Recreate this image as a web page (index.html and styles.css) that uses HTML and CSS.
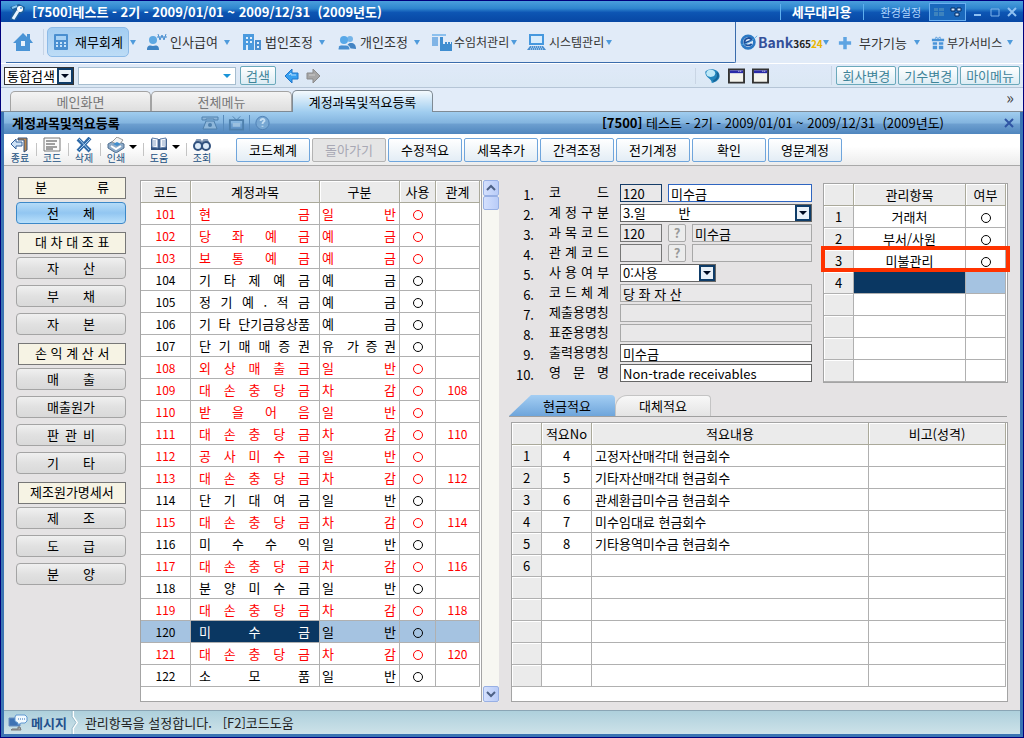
FILE: index.html
```html
<!DOCTYPE html>
<html lang="ko">
<head>
    <meta charset="UTF-8">
    <meta name="viewport" content="width=device-width, initial-scale=1.0">
    <title>계정과목및적요등록</title>
    <link rel="stylesheet" href="styles.css">
</head>
<body>
    <header class="titlebar">
        <svg class="app-icon" viewBox="0 0 16 16"><path d="M1 3l9-3 6 3-1 5-5 3-3 5H1l3-9z" fill="#1d5f9c"/><path d="M4 15L9 7" stroke="#e8f5ff" stroke-width="3"/><path d="M3 4l5-2" stroke="#8cc8f0" stroke-width="2"/><circle cx="11" cy="5" r="3" fill="#fff"/><circle cx="12" cy="4" r="1" fill="#4aa0dd"/></svg>
        <h1>[7500]테스트 - 2기 - 2009/01/01 ~ 2009/12/31 &nbsp;(2009년도)</h1>
        <strong class="edition">세무대리용</strong>
        <a href="#" class="settings">환경설정</a>
        <div class="view-switch">
            <button aria-label="분할"><svg viewBox="0 0 12 10"><path d="M1 1h4v3H1zM6 1h5v3H6zM1 5h4v4H1zM6 5h5v4H6z" fill="#3e83bd"/></svg></button>
            <button aria-label="창"><svg viewBox="0 0 12 10"><path d="M1 1h4v3H1zM7 1h4v3H7zM5 6h4v3H5z" fill="#cfe6ff" stroke="#022b63"/></svg></button>
        </div>
        <div class="window-buttons">
            <button aria-label="최소화"><svg viewBox="0 0 10 10"><path d="M1 8h7" stroke="#8fc1f2" stroke-width="2"/></svg></button>
            <button aria-label="최대화"><svg viewBox="0 0 10 10"><path d="M1 2h8v7H1z" fill="none" stroke="#7fb4ea"/></svg></button>
            <button aria-label="닫기"><svg viewBox="0 0 10 10"><path d="M1 1l8 8M9 1L1 9" stroke="#8fc1f2" stroke-width="2"/></svg></button>
        </div>
    </header>

    <nav class="menubar">
        <div class="menu-main">
            <button class="home" aria-label="홈"><svg viewBox="0 0 20 20"><path d="M10 1l4 4V2h3v5l3 4h-3v8H3v-8H0z" fill="#4a94d6"/><path d="M8 9h4v5H8z" fill="#e8f3fd"/></svg></button>
            <button class="menu-item active">
                <svg viewBox="0 0 16 18"><rect x="1" y="1" width="14" height="16" rx="1" fill="#4a8fd0"/><path d="M3 3h10v4H3z" fill="#a8d2f5"/><path d="M3 10h10M3 13h10" stroke="#c6e2fa" stroke-width="2" stroke-dasharray="2 2"/></svg>
                <span>재무회계</span></button>
            <button class="menu-item">
                <svg viewBox="0 0 20 18"><circle cx="6" cy="7" r="4" fill="#5ea8e2"/><path d="M0 17c0-5 3-5 6-4 3-1 6-1 6 4z" fill="#3f84c4"/><path d="M11 1l2 6 2-5 2 5 2-6M10 4h10" fill="none" stroke="#4a8fd0"/></svg>
                <span>인사급여</span></button>
            <button class="menu-item">
                <svg viewBox="0 0 20 18"><path d="M1 1h11v16H1z" fill="#4b9ade"/><path d="M4 4h2v2H4zM8 4h2v2H8zM4 8h2v2H4zM8 8h2v2H8zM4 12h2v5H4z" fill="#e2effc"/><path d="M13 7h6v10h-6z" fill="#4a8fd0"/><path d="M15 9h2v2h-2zM15 13h2v2h-2z" fill="#e2effc"/></svg>
                <span>법인조정</span></button>
            <button class="menu-item">
                <svg viewBox="0 0 20 18"><circle cx="13" cy="6" r="3" fill="#74b4e8"/><path d="M10 15c0-5 3-5 4-5s5 0 5 6z" fill="#4384c4"/><circle cx="7" cy="7" r="4" fill="#58a8e8"/><path d="M1 17c0-6 3-5 6-5s6 0 6 5z" fill="#4a8fd0" stroke="#e2effc"/></svg>
                <span>개인조정</span></button>
            <button class="menu-item long">
                <svg viewBox="0 0 20 18"><path d="M0 1h14v2H0z" fill="#8cc0ee"/><path d="M0 4h6v9H0z" fill="#80b4e6"/><path d="M8 4h3v7h2V9h2v2h1V9h2v2h1V9h1v9H8z" fill="#3f8dd0"/></svg>
                <span>수임처관리</span></button>
            <button class="menu-item long">
                <svg viewBox="0 0 20 18"><path d="M3 2h13v9H3z" fill="#d8ecfc" stroke="#4698de" stroke-width="2"/><path d="M3 13h13l3 4H0z" fill="#4a8fd0"/><path d="M4 14h11M3 16h13" stroke="#d8ecfc" stroke-dasharray="1 1"/></svg>
                <span>시스템관리</span></button>
        </div>
        <div class="menu-side">
            <button class="menu-item bank">
                <svg class="bank-mark" viewBox="0 0 20 20"><circle cx="9" cy="9" r="7" fill="none" stroke="#2b78c4" stroke-width="3"/><path d="M5 10l8-3c-1-4-7-3-8 1-1 5 5 6 8 3" fill="none" stroke="#1c4f9c" stroke-width="2"/><path d="M1 12C6 12 14 8 19 2" fill="none" stroke="#58a8e0" stroke-width="1"/></svg>
                <span class="bank-name">Bank<small>365<em>24</em></small></span></button>
            <button class="menu-item extra">
                <svg viewBox="0 0 16 16"><path d="M8 1v14M1 8h14" stroke="#5ea4e2" stroke-width="4"/></svg>
                <span>부가기능</span></button>
            <button class="menu-item long service">
                <svg viewBox="0 0 16 16"><path d="M1 3h14v3H1zM2 7h5v3H2zM9 7h5v3H9zM2 11h5v4H2zM9 11h5v4H9z" fill="#4a94d8"/><path d="M5 3l1-2 2 2 2-2 1 2" fill="none" stroke="#4a94d8"/></svg>
                <span>부가서비스</span></button>
        </div>
    </nav>

    <div class="searchbar">
        <select class="search-type" aria-label="검색 구분"><option>통합검색</option></select>
        <input type="text" class="search-text" aria-label="검색어">
        <button class="glass">검색</button>
        <button class="arrow" aria-label="뒤로"><svg viewBox="0 0 16 16"><path d="M1 8l7-7v4h6v6H8v4z" fill="#38a0f0" stroke="#1e76cc"/><path d="M5 7l2-2v2h5" stroke="#b0dcff" fill="none"/></svg></button>
        <button class="arrow" aria-label="앞으로"><svg viewBox="0 0 16 16"><path d="M15 8L8 1v4H2v6h6v4z" fill="#a6a6a6" stroke="#8b8b8b"/><path d="M4 7h6" stroke="#ccc"/></svg></button>
        <div class="shortcuts">
            <button aria-label="웹"><svg viewBox="0 0 18 18"><path d="M1 4c5-5 16-3 16 5 0 4-4 7-9 8 1-5-8-6-7-13z" fill="#2386bd"/><ellipse cx="7" cy="6" rx="5" ry="4" fill="#bde8f8"/><path d="M14 5c3 4 0 8-4 10" stroke="#176496" fill="none" stroke-width="2"/></svg></button>
            <button aria-label="창 1"><svg viewBox="0 0 18 16"><path d="M1 1h16v14H1z" fill="#f4f4ee" stroke="#333" stroke-width="2"/><path d="M2 2h14v3H2z" fill="#2a2aa8"/><path d="M11 3h4" stroke="#fff" stroke-dasharray="1 1"/></svg></button>
            <button aria-label="창 2"><svg viewBox="0 0 18 16"><path d="M1 1h16v14H1z" fill="#f4f4ee" stroke="#333" stroke-width="2"/><path d="M2 2h14v3H2z" fill="#2a2aa8"/><path d="M11 3h4" stroke="#fff" stroke-dasharray="1 1"/></svg></button>
        </div>
        <div class="quick">
            <button class="glass">회사변경</button>
            <button class="glass">기수변경</button>
            <button class="glass">마이메뉴</button>
        </div>
    </div>

    <div class="page-tabs">
        <button>메인화면</button>
        <button>전체메뉴</button>
        <button class="active">계정과목및적요등록</button>
        <span class="more">»</span>
    </div>

    <div class="frame">
        <div class="subtitle">
            <h2>계정과목및적요등록</h2>
            <div class="sub-icons">
                <svg viewBox="0 0 18 16"><path d="M1 5V2h16v3h-4V4H5v1zM5 6h8l3 8H2z" fill="#8db6da" stroke="#4e80ad"/><circle cx="9" cy="10" r="2" fill="#4e80ad"/></svg>
                <svg viewBox="0 0 18 16"><path d="M2 5h14v10H2z" fill="none" stroke="#4e80ad" stroke-width="2"/><path d="M5 1l4 4 4-4" fill="none" stroke="#4e80ad"/><path d="M5 8h8v4H5z" fill="#9bc0df"/></svg>
                <svg viewBox="0 0 18 16"><circle cx="9" cy="8" r="7" fill="#77a7d3" stroke="#4e80b5"/><path d="M7 6c0-3 5-3 4 0-1 1-2 1-2 3M9 11v1" stroke="#c3ddf2" stroke-width="2" fill="none"/></svg>
            </div>
            <p><b>[7500]</b> 테스트 - 2기 - 2009/01/01 ~ 2009/12/31 &nbsp;(2009년도)</p>
            <button class="close" aria-label="화면 닫기"><svg viewBox="0 0 10 10"><path d="M1 1l8 8M9 1L1 9" stroke="#2f55a4" stroke-width="2"/></svg></button>
        </div>

        <div class="toolbar">
            <button class="tool"><svg viewBox="0 0 20 16"><path d="M8 1h9v12l-3 2V3H8z" fill="#c08a4c" stroke="#30507e"/><path d="M1 7l5-5v3h6v4H6v3z" fill="#cfe2f6" stroke="#33609a"/></svg>종료</button>
            <button class="tool"><svg viewBox="0 0 20 16"><path d="M2 1h16v13H2z" fill="#fafafa" stroke="#777"/><path d="M4 4h11M4 7h9M4 10h11M4 12h7" stroke="#444"/></svg>코드</button>
            <button class="tool"><svg viewBox="0 0 20 16"><path d="M4 2l12 12M16 1L4 14" stroke="#2f6aa8" stroke-width="4"/><path d="M5 2l10 11M16 2L5 13" stroke="#a8cef0"/></svg>삭제</button>
            <button class="tool drop"><svg viewBox="0 0 20 16"><path d="M2 7l7-4 9 4v4l-8 5-8-5z" fill="#8caac8" stroke="#506f90"/><path d="M6 5l5-5 6 3-4 5z" fill="#f4f4f4" stroke="#999"/><path d="M5 9l5 3 5-3" fill="none" stroke="#fff" stroke-width="2"/><path d="M7 7l4-2 4 2-4 2z" fill="#3f8dcd"/></svg>인쇄</button>
            <button class="tool drop"><svg viewBox="0 0 20 16"><path d="M2 2h16v11H2z" fill="#31517e"/><path d="M3 1l6 1v9l-6-1zM17 1l-6 1v9l6-1z" fill="#f7f9fd" stroke="#5d7da8"/><path d="M4 4h3M4 6h3M4 8h3M13 4h3M13 6h3M13 8h3" stroke="#90a8c8"/></svg>도움</button>
            <button class="tool"><svg viewBox="0 0 20 16"><path d="M3 7l2-4h3l2 3 2-3h3l2 4" fill="none" stroke="#8499b5" stroke-width="2"/><circle cx="6" cy="9" r="4" fill="#dceaf8" stroke="#31517e" stroke-width="2"/><circle cx="14" cy="9" r="4" fill="#dceaf8" stroke="#31517e" stroke-width="2"/></svg>조회</button>
            <div class="actions">
                <button>코드체계</button>
                <button disabled>돌아가기</button>
                <button>수정적요</button>
                <button>세목추가</button>
                <button>간격조정</button>
                <button>전기계정</button>
                <button>확인</button>
                <button>영문계정</button>
            </div>
        </div>

        <main class="content">
            <aside class="categories">
                <section>
                    <h3>분 류</h3>
                    <button class="active"><span>전 체</span></button>
                </section>
                <section>
                    <h3>대 차 대 조 표</h3>
                    <button><span>자 산</span></button>
                    <button><span>부 채</span></button>
                    <button><span>자 본</span></button>
                </section>
                <section>
                    <h3>손 익 계 산 서</h3>
                    <button><span>매 출</span></button>
                    <button><span>매출원가</span></button>
                    <button><span>판 관 비</span></button>
                    <button><span>기 타</span></button>
                </section>
                <section>
                    <h3>제조원가명세서</h3>
                    <button><span>제 조</span></button>
                    <button><span>도 급</span></button>
                    <button><span>분 양</span></button>
                </section>
            </aside>

            <div class="accounts">
                <table class="grid">
                    <colgroup><col class="w50"><col><col class="w80"><col class="w36"><col class="w44"></colgroup>
                    <thead><tr><th>코드</th><th>계정과목</th><th>구분</th><th>사용</th><th>관계</th></tr></thead>
                    <tbody>
                        <tr class="red"><td class="num">101</td><td class="name">현 금</td><td class="kind">일 반</td><td><i></i></td><td class="num"></td></tr>
                        <tr class="red"><td class="num">102</td><td class="name">당 좌 예 금</td><td class="kind">예 금</td><td><i></i></td><td class="num"></td></tr>
                        <tr class="red"><td class="num">103</td><td class="name">보 통 예 금</td><td class="kind">예 금</td><td><i></i></td><td class="num"></td></tr>
                        <tr><td class="num">104</td><td class="name">기 타 제 예 금</td><td class="kind">예 금</td><td><i></i></td><td class="num"></td></tr>
                        <tr><td class="num">105</td><td class="name">정 기 예 . 적 금</td><td class="kind">예 금</td><td><i></i></td><td class="num"></td></tr>
                        <tr><td class="num">106</td><td class="name">기 타 단기금융상품</td><td class="kind">예 금</td><td><i></i></td><td class="num"></td></tr>
                        <tr><td class="num">107</td><td class="name">단 기 매 매 증 권</td><td class="kind">유 &nbsp;가 증 권</td><td><i></i></td><td class="num"></td></tr>
                        <tr class="red"><td class="num">108</td><td class="name">외 상 매 출 금</td><td class="kind">일 반</td><td><i></i></td><td class="num"></td></tr>
                        <tr class="red"><td class="num">109</td><td class="name">대 손 충 당 금</td><td class="kind">차 감</td><td><i></i></td><td class="num">108</td></tr>
                        <tr class="red"><td class="num">110</td><td class="name">받 을 어 음</td><td class="kind">일 반</td><td><i></i></td><td class="num"></td></tr>
                        <tr class="red"><td class="num">111</td><td class="name">대 손 충 당 금</td><td class="kind">차 감</td><td><i></i></td><td class="num">110</td></tr>
                        <tr class="red"><td class="num">112</td><td class="name">공 사 미 수 금</td><td class="kind">일 반</td><td><i></i></td><td class="num"></td></tr>
                        <tr class="red"><td class="num">113</td><td class="name">대 손 충 당 금</td><td class="kind">차 감</td><td><i></i></td><td class="num">112</td></tr>
                        <tr><td class="num">114</td><td class="name">단 기 대 여 금</td><td class="kind">일 반</td><td><i></i></td><td class="num"></td></tr>
                        <tr class="red"><td class="num">115</td><td class="name">대 손 충 당 금</td><td class="kind">차 감</td><td><i></i></td><td class="num">114</td></tr>
                        <tr><td class="num">116</td><td class="name">미 수 수 익</td><td class="kind">일 반</td><td><i></i></td><td class="num"></td></tr>
                        <tr class="red"><td class="num">117</td><td class="name">대 손 충 당 금</td><td class="kind">차 감</td><td><i></i></td><td class="num">116</td></tr>
                        <tr><td class="num">118</td><td class="name">분 양 미 수 금</td><td class="kind">일 반</td><td><i></i></td><td class="num"></td></tr>
                        <tr class="red"><td class="num">119</td><td class="name">대 손 충 당 금</td><td class="kind">차 감</td><td><i></i></td><td class="num">118</td></tr>
                        <tr class="selected"><td class="num">120</td><td class="name cursor">미 수 금</td><td class="kind">일 반</td><td><i></i></td><td class="num"></td></tr>
                        <tr class="red"><td class="num">121</td><td class="name">대 손 충 당 금</td><td class="kind">차 감</td><td><i></i></td><td class="num">120</td></tr>
                        <tr><td class="num">122</td><td class="name">소 모 품</td><td class="kind">일 반</td><td><i></i></td><td class="num"></td></tr>
                    </tbody>
                </table>
            </div>
            <div class="scrollbar">
                <button aria-label="위로"><svg viewBox="0 0 10 10"><path d="M1 7l4-4 4 4" fill="none" stroke="#4d6185" stroke-width="2"/></svg></button>
                <div class="thumb"></div>
                <button class="down" aria-label="아래로"><svg viewBox="0 0 10 10"><path d="M1 3l4 4 4-4" fill="none" stroke="#4d6185" stroke-width="2"/></svg></button>
            </div>

            <div class="detail">
                <div class="detail-top">
                    <form class="account-form">
                        <div class="row"><label for="code"><span>1.</span><b>코 드</b></label><input class="short navy" id="code" value="120" readonly><input class="focus" aria-label="코드명" value="미수금"></div>
                        <div class="row"><label for="type"><span>2.</span><b>계 정 구 분</b></label><select id="type"><option>3.일 &nbsp; &nbsp; &nbsp; &nbsp; 반</option></select></div>
                        <div class="row"><label for="subject"><span>3.</span><b>과 목 코 드</b></label><input class="short dark" id="subject" value="120" readonly><button type="button" class="help">?</button><input aria-label="과목명" value="미수금" readonly></div>
                        <div class="row"><label for="related"><span>4.</span><b>관 계 코 드</b></label><input class="short dark" id="related" readonly><button type="button" class="help">?</button><input aria-label="관계코드명" readonly></div>
                        <div class="row"><label for="use"><span>5.</span><b>사 용 여 부</b></label><select class="half" id="use"><option>0:사용</option></select></div>
                        <div class="row"><label for="system"><span>6.</span><b>코 드 체 계</b></label><input id="system" value="당 좌 자 산" readonly></div>
                        <div class="row"><label for="submit-name"><span>7.</span><b>제출용명칭</b></label><input id="submit-name" readonly></div>
                        <div class="row"><label for="std-name"><span>8.</span><b>표준용명칭</b></label><input id="std-name" readonly></div>
                        <div class="row"><label for="print-name"><span>9.</span><b>출력용명칭</b></label><input id="print-name" value="미수금"></div>
                        <div class="row"><label for="eng-name"><span>10.</span><b>영 문 명</b></label><input id="eng-name" value="Non-trade receivables"></div>
                    </form>

                    <div class="box manage">
                        <table class="grid">
                            <colgroup><col class="w30"><col><col class="w40"></colgroup>
                            <thead><tr><th></th><th>관리항목</th><th>여부</th></tr></thead>
                            <tbody>
                                <tr><th>1</th><td>거래처</td><td><i></i></td></tr>
                                <tr><th>2</th><td>부서/사원</td><td><i></i></td></tr>
                                <tr><th>3</th><td>미불관리</td><td><i></i></td></tr>
                                <tr class="selected"><th>4</th><td class="cursor"></td><td></td></tr>
                                <tr><th></th><td></td><td></td></tr>
                                <tr><th></th><td></td><td></td></tr>
                                <tr><th></th><td></td><td></td></tr>
                                <tr><th></th><td></td><td></td></tr>
                            </tbody>
                        </table>
                        <div class="marker"></div>
                    </div>
                </div>

                <div class="memo-tabs">
                    <button class="active">현금적요</button>
                    <button>대체적요</button>
                </div>

                <div class="box memos">
                    <table class="grid">
                        <colgroup><col class="w30"><col class="w50"><col><col class="w137"></colgroup>
                        <thead><tr><th></th><th>적요No</th><th>적요내용</th><th>비고(성격)</th></tr></thead>
                        <tbody>
                            <tr><th>1</th><td>4</td><td class="left">고정자산매각대 현금회수</td><td></td></tr>
                            <tr><th>2</th><td>5</td><td class="left">기타자산매각대 현금회수</td><td></td></tr>
                            <tr><th>3</th><td>6</td><td class="left">관세환급미수금 현금회수</td><td></td></tr>
                            <tr><th>4</th><td>7</td><td class="left">미수임대료 현금회수</td><td></td></tr>
                            <tr><th>5</th><td>8</td><td class="left">기타용역미수금 현금회수</td><td></td></tr>
                            <tr><th>6</th><td></td><td></td><td></td></tr>
                            <tr><th></th><td></td><td></td><td></td></tr>
                            <tr><th></th><td></td><td></td><td></td></tr>
                            <tr><th></th><td></td><td></td><td></td></tr>
                            <tr><th></th><td></td><td></td><td></td></tr>
                            <tr><th></th><td></td><td></td><td></td></tr>
                        </tbody>
                    </table>
                </div>
            </div>
        </main>

        <footer class="statusbar">
            <svg viewBox="0 0 20 18"><path d="M1 4h11v8H1z" fill="#3f73b4" stroke="#6a8fc0"/><path d="M4 15h6v-2h2l1 3H3z" fill="#a8a8a8" stroke="#777"/><path d="M8 1h9l2 2v4l-2 2h-4l-3 2V9L7 7V3z" fill="#f2faff" stroke="#5f98d2"/><path d="M10 5h7" stroke="#2f6cb5" stroke-width="1" stroke-dasharray="1 1"/></svg>
            <strong>메시지</strong>
            <svg class="divider" viewBox="0 0 8 24"><path d="M2 0v6l4 6-4 6v6" fill="none" stroke="#fff" stroke-width="2"/><path d="M1 0v6l4 6-4 6v6" fill="none" stroke="#8fb4c4"/></svg>
            <p>관리항목을 설정합니다. &nbsp; [F2]코드도움</p>
        </footer>
    </div>
</body>
</html>
```
FILE: styles.css
```css
:root {
    --navy: #00007c;
    --frame: #3b75b3;
    --line: #b0b0b0;
    --panel: #e5e3e4;
    --head: #ebebeb;
    --cursor: #0a3762;
    --row: #a5c3e1;
    --red: #ff0000;
}

* {
    box-sizing: border-box;
}

body {
    margin: 0;
    min-height: 100vh;
    display: flex;
    flex-direction: column;
    border: 1px solid var(--navy);
    background: #e1ebf8;
    color: #000;
    font-family: "Noto Sans CJK KR", sans-serif;
    font-size: 13px;
    line-height: 16px;
}

h1, h2, h3, p {
    margin: 0;
    font-size: 13px;
}

button, input, select {
    font: inherit;
    color: inherit;
    margin: 0;
    padding: 0;
    border-radius: 0;
}

button {
    border: none;
    background: none;
    white-space: nowrap;
}

svg {
    display: block;
    flex: none;
}

/* title bar */
.titlebar {
    display: flex;
    align-items: center;
    height: 21px;
    padding: 0 6px 0 8px;
    background: linear-gradient(#4a9fdc, #2f86cf 35%, #0d55b3 55%, #0747a4);
    color: #fff;
}

.app-icon {
    width: 16px;
    height: 16px;
    margin-right: 7px;
}

.titlebar h1 {
    flex: 1;
    white-space: pre;
}

.edition {
    padding: 0 11px;
    border: solid #5fb0ee;
    border-width: 0 1px;
}

.settings {
    margin: 0 8px 0 17px;
    color: #b3d8ff;
    font-size: 11px;
    text-decoration: none;
}

.view-switch {
    display: flex;
    align-items: center;
    gap: 5px;
    height: 18px;
    padding: 0 3px;
    border: 1px solid #69aef0;
    background: #1a68bc;
}

.view-switch svg {
    width: 12px;
    height: 10px;
}

.window-buttons {
    display: flex;
    gap: 7px;
    margin-left: 7px;
}

.window-buttons svg {
    width: 10px;
    height: 10px;
}

/* main menu */
.menubar {
    display: flex;
    height: 41px;
    padding-left: 5px;
}

.menu-main {
    flex: 1;
    display: flex;
    align-items: center;
    border-right: 1px solid #3a6cac;
    border-bottom: 1px solid #3a6cac;
    border-bottom-right-radius: 2px;
}

.home {
    width: 38px;
    height: 26px;
    padding-left: 7px;
    border-right: 1px solid #c6d4e6;
}

.home svg {
    width: 20px;
    height: 20px;
}

.menu-item {
    display: flex;
    align-items: center;
    gap: 3px;
    width: 95px;
    height: 30px;
    padding: 0 6px;
    color: #333;
}

.menu-item svg {
    width: 20px;
    height: 18px;
}

.menu-item::after {
    content: "";
    margin-left: auto;
    border: 3px solid transparent;
    border-top: 5px solid #4f9bdc;
    border-bottom: none;
}

.menu-item.active {
    position: relative;
    width: 82px;
    margin: 0 12px 0 3px;
    padding-left: 5px;
    gap: 6px;
    border: 1px solid #8dbbe8;
    border-radius: 5px;
    background: linear-gradient(#a3cdf2, #bddcf6);
    color: #000;
}

.menu-item.active svg {
    width: 16px;
}

.menu-item.active::after {
    position: absolute;
    right: -8px;
}

.menu-item.long {
    font-size: 12px;
    gap: 2px;
}

.menu-side {
    display: flex;
    align-items: center;
    padding-right: 5px;
}

.menu-side .menu-item {
    padding: 0 5px 0 8px;
}

.menu-side .menu-item svg {
    width: 14px;
    height: 14px;
}

.menu-side .menu-item.extra {
    gap: 7px;
    padding-left: 10px;
    padding-right: 3px;
}

.menu-side .menu-item.bank {
    width: 92px;
    gap: 0;
    padding: 0 4px;
}

.menu-side .bank .bank-mark {
    width: 18px;
    height: 18px;
}

.bank-name {
    color: #34509a;
    font-size: 14px;
    font-weight: bold;
}

.bank-name small {
    color: #222;
    font-size: 10px;
}

.bank-name em {
    color: #e8b400;
    font-style: normal;
}

/* search row */
.searchbar {
    display: flex;
    align-items: center;
    height: 25px;
    padding: 0 3px;
    border-top: 1px solid #fff;
    border-bottom: 1px solid #b5c5d6;
    background: linear-gradient(#dfe9f8, #dbe8f4);
}

select {
    appearance: none;
    border: 1px solid #333;
    background: #fff url("data:image/svg+xml,%3Csvg xmlns='http://www.w3.org/2000/svg' width='16' height='16'%3E%3Cpath d='M1 1h14v14H1z' fill='%23eaf1f8' stroke='%230f3c68' stroke-width='2'/%3E%3Cpath d='M4 6h8l-4 4z' fill='%23000a20'/%3E%3C/svg%3E") no-repeat right center;
}

.search-type {
    width: 70px;
    height: 18px;
    padding-left: 2px;
    line-height: 16px;
}

.search-text {
    width: 158px;
    height: 18px;
    margin: 0 4px;
    border: 1px solid #a6bdcf;
    background: #fff url("data:image/svg+xml,%3Csvg xmlns='http://www.w3.org/2000/svg' width='16' height='16'%3E%3Cpath d='M4 6h8l-4 4z' fill='%231a94d8'/%3E%3C/svg%3E") no-repeat right center;
}

.glass {
    height: 19px;
    padding: 0 5px;
    border: 1px solid #6ba9bb;
    border-radius: 2px;
    background: linear-gradient(#fff, #dcecf4);
    color: #3f8499;
    line-height: 16px;
}

.arrow {
    margin-left: 8px;
}

.arrow + .arrow {
    margin-left: 5px;
}

.arrow svg {
    width: 16px;
    height: 16px;
}

.shortcuts {
    display: flex;
    gap: 7px;
    margin-left: auto;
    padding: 0 62px 0 8px;
    border-left: 1px solid #c9d5e4;
}

.shortcuts svg {
    width: 17px;
    height: 16px;
}

.quick {
    display: flex;
    gap: 2px;
    padding-left: 4px;
    border-left: 1px solid #c9d5e4;
}

/* open pages */
.page-tabs {
    display: flex;
    align-items: flex-end;
    height: 24px;
    padding-left: 9px;
    border-bottom: 1px solid #7f8a94;
    background: #e2ecf9;
}

.page-tabs button {
    width: 141px;
    height: 20px;
    border: 1px solid #a3a3a3;
    border-bottom: none;
    border-radius: 5px 5px 0 0;
    background: linear-gradient(#f4f4f4, #dedede);
    color: #777;
}

.page-tabs .active {
    height: 22px;
    margin-bottom: -1px;
    border-color: #7f8a94;
    background: linear-gradient(#f4fafe, #a0cdef);
    color: #000;
}

.more {
    margin-left: auto;
    padding: 0 9px 6px 0;
    color: #444;
    font-size: 16px;
}

.frame {
    flex: 1;
    display: flex;
    flex-direction: column;
    border: solid var(--frame);
    border-width: 0 3px 3px;
}

.subtitle {
    display: flex;
    align-items: center;
    height: 22px;
    padding: 0 6px 0 8px;
    background: linear-gradient(#a0cdef, #83b4df 50%, #6d9fd0 55%, #4f86be);
}

.subtitle h2 {
    width: 185px;
}

.sub-icons {
    display: flex;
}

.sub-icons svg {
    width: 26px;
    height: 16px;
    padding: 0 4px;
    border-left: 1px solid #578abb;
}

.sub-icons svg:first-child {
    border-left: none;
}

.subtitle p {
    margin-left: auto;
    white-space: pre;
}

.close {
    margin-left: 60px;
}

.close svg {
    width: 10px;
    height: 10px;
}

/* toolbar */
.toolbar {
    display: flex;
    align-items: center;
    height: 32px;
    border-bottom: 1px solid #a9a9a9;
    background: linear-gradient(#fff 40%, #ececec);
}

.tool {
    display: flex;
    flex-direction: column;
    align-items: center;
    position: relative;
    width: 32px;
    color: #22507f;
    font-size: 10px;
    line-height: 10px;
}

.tool svg {
    width: 20px;
    height: 16px;
}

.tool + .tool::before {
    content: "";
    position: absolute;
    left: 0;
    top: 6px;
    height: 13px;
    border-left: 1px solid #c4c4c4;
}

.tool.drop {
    width: 43px;
    padding-right: 11px;
}

.tool.drop::after {
    content: "";
    position: absolute;
    right: 6px;
    top: 8px;
    border: 4px solid transparent;
    border-top-color: #000;
    border-bottom: none;
}

.actions {
    display: flex;
    gap: 2px;
    margin-left: 18px;
}

.actions button {
    width: 74px;
    height: 24px;
    border: 1px solid #6fa5dc;
    border-radius: 2px;
    background: linear-gradient(#fff, #e3edf5);
}

.actions button:disabled {
    border-color: #b3b3b3;
    background: #e5e5e5;
    color: #a8a8b4;
}

/* work area */
.content {
    flex: 1;
    display: flex;
    padding: 14px 12px 8px;
    background: var(--panel);
}

.categories {
    width: 110px;
    margin: -3px 14px 0 0;
}

.categories section {
    display: flex;
    flex-direction: column;
    gap: 6px;
    margin-bottom: 8px;
}

.categories h3 {
    height: 22px;
    margin: 0 0 -3px 2px;
    padding: 0 16px;
    border: 1px solid #777;
    background: #f6f3e4;
    font-weight: normal;
    line-height: 18px;
    text-align-last: justify;
    white-space: nowrap;
}

.categories section:last-child h3 {
    padding: 0 11px;
}

.categories button {
    height: 22px;
    padding: 0 30px;
    border: 1px solid #a4a4a4;
    border-radius: 4px;
    background: linear-gradient(#f0f0f0, #e1e1e1 50%, #d9d9d9);
    line-height: 18px;
}

.categories span {
    display: block;
    text-align-last: justify;
}

.categories .active {
    border-color: #3c88c8;
    background: linear-gradient(#b5dbf8, #92c6f1 50%, #b9e0fb);
}

.accounts, .box {
    border: 1px solid #a4a4a4;
    background: #fff;
    padding-right: 1px;
}

.accounts {
    width: 342px;
}

/* data tables */
.grid {
    width: 100%;
    table-layout: fixed;
    border-collapse: separate;
    border-spacing: 0;
}

.w30 { width: 30px; }
.w36 { width: 36px; }
.w40 { width: 40px; }
.w44 { width: 44px; }
.w50 { width: 50px; }
.w80 { width: 80px; }
.w137 { width: 137px; }

.grid th, .grid td {
    height: 22px;
    padding: 0;
    border-right: 1px solid var(--line);
    border-bottom: 1px solid var(--line);
    font-weight: normal;
    text-align: center;
    white-space: nowrap;
}

.grid th {
    background: var(--head);
    box-shadow: inset 1px 1px #fff;
}

.grid thead th {
    border-color: #aaa99a;
}

.grid .num {
    font-size: 12px;
}

.grid .name, .grid .kind {
    text-align-last: justify;
}

.grid .name {
    padding: 0 9px 0 8px;
}

.grid .kind {
    padding: 0 3px 0 2px;
}

.grid .left {
    padding-left: 3px;
    text-align: left;
}

.grid i {
    display: inline-block;
    width: 10px;
    height: 10px;
    border: 1px solid currentColor;
    border-radius: 50%;
    vertical-align: middle;
}

.red {
    color: var(--red);
}

.selected td {
    background: var(--row);
}

.selected .cursor {
    background: var(--cursor);
    color: #fff;
}

.scrollbar {
    display: flex;
    flex-direction: column;
    width: 17px;
    padding-left: 1px;
    background: #f7f7f2;
}

.scrollbar button, .thumb {
    height: 16px;
    border: 1px solid #98b0e4;
    border-radius: 2px;
    background: linear-gradient(90deg, #d4e0fd, #b9ccf8);
}

.scrollbar svg {
    width: 10px;
    height: 10px;
    margin: 0 auto;
}

.thumb {
    height: 14px;
}

.scrollbar .down {
    margin-top: auto;
}

.detail {
    flex: 1;
    display: flex;
    flex-direction: column;
    padding-left: 10px;
}

.detail-top {
    display: flex;
    padding: 3px 0 0 2px;
}

.account-form {
    display: flex;
    flex-direction: column;
    gap: 2px;
    width: 301px;
    margin: 1px 11px 0 0;
}

.row {
    display: flex;
    gap: 6px;
    height: 18px;
}

.row label {
    display: flex;
    flex: none;
    width: 103px;
}

.row label span {
    width: 23px;
    margin-right: 15px;
    padding-top: 3px;
    text-align: right;
}

.row label b {
    width: 60px;
    font-weight: normal;
    text-align-last: justify;
    white-space: nowrap;
}

.row input, .row select {
    flex: 1;
    min-width: 0;
    height: 18px;
    padding: 0 2px;
    border: 1px solid #666;
    background-color: #fff;
    line-height: 16px;
}

.row input:read-only {
    border-color: #a8a8a8;
    background: #e9e8e9;
}

.row .short {
    flex: none;
    width: 42px;
}

.row .short.navy {
    border-color: #153c68;
}

.row .short.dark {
    border-color: #777;
}

.row .focus {
    border-color: #2f65c0;
}

.row .half {
    flex: none;
    width: 96px;
}

.help {
    width: 18px;
    border: 1px solid #a8a8a8;
    border-radius: 2px;
    background: #ececec;
    color: #999;
    font-weight: bold;
}

.manage {
    position: relative;
    flex: 1;
}

/* highlight frame over the third row */
.marker {
    position: absolute;
    top: 62px;
    left: -3px;
    right: -3px;
    height: 26px;
    border: 4px solid #ff3300;
}

.memo-tabs {
    display: flex;
    height: 22px;
    margin: 12px 1px 5px 0;
    border-bottom: 1px solid #a0a0a0;
}

.memo-tabs button {
    width: 96px;
    border: 1px solid #c4c4c4;
    border-bottom: none;
    border-radius: 12px 4px 0 0;
    background: linear-gradient(#f8f8f8, #e4e4e4);
}

.memo-tabs .active {
    width: 106px;
    padding-left: 10px;
    border: none;
    border-radius: 0 4px 0 0;
    background: linear-gradient(#a4cef3, #6ea5db);
    clip-path: polygon(22px 0, 100% 0, 100% 100%, 0 100%);
}

.memos {
    flex: 1;
    margin-left: 2px;
}

/* status bar */
.statusbar {
    display: flex;
    align-items: center;
    height: 24px;
    padding-left: 4px;
    border-top: 1px solid #8aa5b5;
    background: linear-gradient(#aed0dc, #cde2e9);
}

.statusbar svg {
    width: 20px;
    height: 18px;
}

.statusbar strong {
    margin: 0 4px 0 3px;
    color: #22508c;
}

.statusbar .divider {
    width: 8px;
    height: 23px;
}

.statusbar p {
    margin-left: 6px;
    color: #222;
    white-space: pre;
}
```
